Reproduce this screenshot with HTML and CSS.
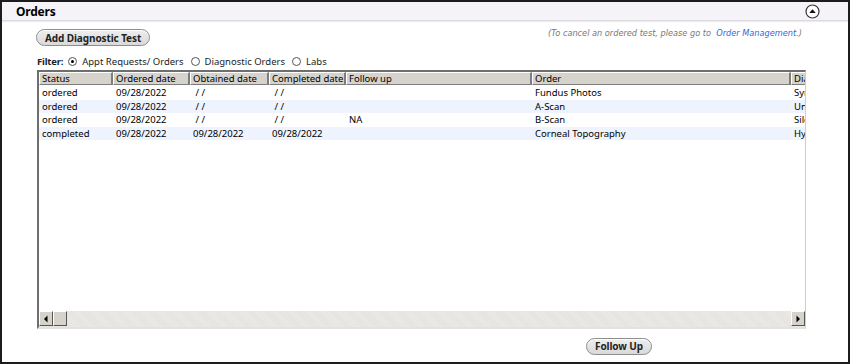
FILE: index.html
```html
<!DOCTYPE html>
<html>
<head>
<meta charset="utf-8">
<link rel="stylesheet" href="styles.css">
</head>
<body>
<div class="frame">
  <div class="header">
    <span class="title">Orders</span>
    <span class="collapse"><svg width="15" height="15" viewBox="0 0 15 15"><circle cx="7.5" cy="7.5" r="6.5" fill="#fff" stroke="#333" stroke-width="1.2"/><path d="M4.3 9 L7.5 5.3 L10.7 9 Z" fill="#111"/></svg></span>
  </div>
  <div class="content">
    <div class="toprow">
      <button class="pill">Add Diagnostic Test</button>
      <span class="note">(To cancel an ordered test, please go to&nbsp; <a class="link">Order Management</a>.)</span>
    </div>
    <div class="filter">
      <b>Filter:</b>
      <span class="radio on"></span><span class="opt">Appt Requests/ Orders</span>
      <span class="radio"></span><span class="opt">Diagnostic Orders</span>
      <span class="radio"></span><span class="opt">Labs</span>
    </div>
    <div class="grid">
      <div class="viewport">
        <div class="row head">
          <div class="c c1">Status</div><div class="c c2">Ordered date</div><div class="c c3">Obtained date</div><div class="c c4">Completed date</div><div class="c c5">Follow up</div><div class="c c6">Order</div><div class="c c7">Diagnosis</div>
        </div>
        <div class="row">
          <div class="c c1">ordered</div><div class="c c2">09/28/2022</div><div class="c c3">&nbsp;/ /</div><div class="c c4">&nbsp;/ /</div><div class="c c5"></div><div class="c c6">Fundus Photos</div><div class="c c7">Symptom</div>
        </div>
        <div class="row alt">
          <div class="c c1">ordered</div><div class="c c2">09/28/2022</div><div class="c c3">&nbsp;/ /</div><div class="c c4">&nbsp;/ /</div><div class="c c5"></div><div class="c c6">A-Scan</div><div class="c c7">Unspecified</div>
        </div>
        <div class="row">
          <div class="c c1">ordered</div><div class="c c2">09/28/2022</div><div class="c c3">&nbsp;/ /</div><div class="c c4">&nbsp;/ /</div><div class="c c5">NA</div><div class="c c6">B-Scan</div><div class="c c7">Silent</div>
        </div>
        <div class="row alt">
          <div class="c c1">completed</div><div class="c c2">09/28/2022</div><div class="c c3">09/28/2022</div><div class="c c4">09/28/2022</div><div class="c c5"></div><div class="c c6">Corneal Topography</div><div class="c c7">Hyperopia</div>
        </div>
      </div>
      <div class="hscroll">
        <div class="sbtn"><svg width="6" height="8" viewBox="0 0 6 8"><path d="M4.5 0.5 L1 4 L4.5 7.5 Z" fill="#000"/></svg></div>
        <div class="thumb"></div>
        <div class="track"></div>
        <div class="sbtn"><svg width="6" height="8" viewBox="0 0 6 8"><path d="M1.5 0.5 L5 4 L1.5 7.5 Z" fill="#000"/></svg></div>
      </div>
    </div>
    <div class="bottom">
      <button class="pill">Follow Up</button>
    </div>
  </div>
</div>
</body>
</html>
```
FILE: styles.css
```css
html, body {
  margin: 0;
  padding: 0;
  background: #fff;
}
.frame {
  width: 850px;
  height: 364px;
  box-sizing: border-box;
  border: 2px solid #1c1c1c;
  font-family: "Noto Sans", "Open Sans", sans-serif;
  color: #000;
  overflow: hidden;
}
.header {
  height: 18px;
  background: #f5f3f7;
  border-bottom: 1px solid #dcd9df;
  box-shadow: 0 1px 1px #ecebee;
  display: flex;
  align-items: center;
  justify-content: space-between;
  padding: 0 28px 0 14px;
}
.title {
  font-weight: bold;
  font-size: 12px;
  letter-spacing: -0.2px;
}
.collapse {
  display: flex;
}
.content {
  padding-left: 34px;
}
.toprow {
  display: flex;
  justify-content: space-between;
  align-items: flex-start;
  padding-top: 8px;
  padding-right: 46px;
}
.pill {
  font-family: "Noto Sans", "Open Sans", sans-serif;
  font-weight: bold;
  font-size: 10px;
  letter-spacing: -0.1px;
  height: 17px;
  padding: 0 8px;
  line-height: 14px;
  border: 1px solid #8d8d8d;
  border-radius: 9px;
  background: linear-gradient(#eeeeee, #d9d9d9);
  color: #222;
  box-shadow: inset 0 1px 0 #fff;
  cursor: default;
}
.note {
  font-family: "DejaVu Sans", sans-serif;
  font-style: italic;
  font-size: 8.2px;
  color: #777;
  margin-top: -1px;
}
.link {
  color: #3366dd;
}
.filter {
  display: flex;
  align-items: center;
  font-size: 9.5px;
  margin-top: 9px;
  margin-left: 1px;
  height: 12px;
  color: #222;
}
.filter b {
  margin-right: 5px;
  letter-spacing: -0.2px;
}
.radio {
  width: 9px;
  height: 9px;
  border: 1px solid #555;
  border-radius: 50%;
  box-sizing: border-box;
  display: inline-block;
  margin-right: 5px;
  position: relative;
}
.radio.on::after {
  content: "";
  position: absolute;
  left: 2px;
  top: 2px;
  width: 3px;
  height: 3px;
  border-radius: 50%;
  background: #000;
}
.opt {
  margin-right: 7px;
}
.grid {
  margin-top: 3px;
  margin-left: 1px;
  width: 769px;
  height: 259px;
  box-sizing: border-box;
  border-top: 2px solid #6e6e6e;
  border-left: 2px solid #6e6e6e;
  border-right: 1px solid #cfcfcf;
  border-bottom: 2px solid #e2e2e2;
  display: flex;
  flex-direction: column;
  background: #fff;
}
.viewport {
  flex: 1;
  overflow: hidden;
  font-size: 9.5px;
}
.row {
  display: flex;
  height: 13.5px;
  line-height: 13.5px;
  white-space: nowrap;
}
.row.alt {
  background: #eef3fd;
}
.row.head {
  background: #d6d3cd;
  height: 13px;
  line-height: 12px;
  margin-bottom: 1px;
}
.row.head .c {
  box-sizing: border-box;
  border-right: 2px solid #7d7d7d;
  border-bottom: 1px solid #7d7d7d;
  border-left: 1px solid #fff;
  border-top: 1px solid #fff;
  padding-left: 2px;
}
.c {
  padding-left: 3px;
  box-sizing: border-box;
  overflow: hidden;
  flex: none;
}
.c1 { width: 74px; }
.c2 { width: 77px; }
.c3 { width: 79px; }
.c4 { width: 77px; }
.c5 { width: 186px; }
.c6 { width: 259px; }
.c7 { width: 60px; }
.hscroll {
  height: 16px;
  display: flex;
  background: repeating-linear-gradient(45deg, #ebeae7 0 1px, #e4e3df 1px 2px);
}
.sbtn, .thumb {
  width: 14px;
  height: 15px;
  box-sizing: border-box;
  background: #d6d3cd;
  border-top: 1px solid #fff;
  border-left: 1px solid #fff;
  border-right: 1px solid #555;
  border-bottom: 1px solid #555;
  display: flex;
  align-items: center;
  justify-content: center;
}
.track {
  flex: 1;
}
.bottom {
  padding-left: 550px;
  padding-top: 4px;
}
```
